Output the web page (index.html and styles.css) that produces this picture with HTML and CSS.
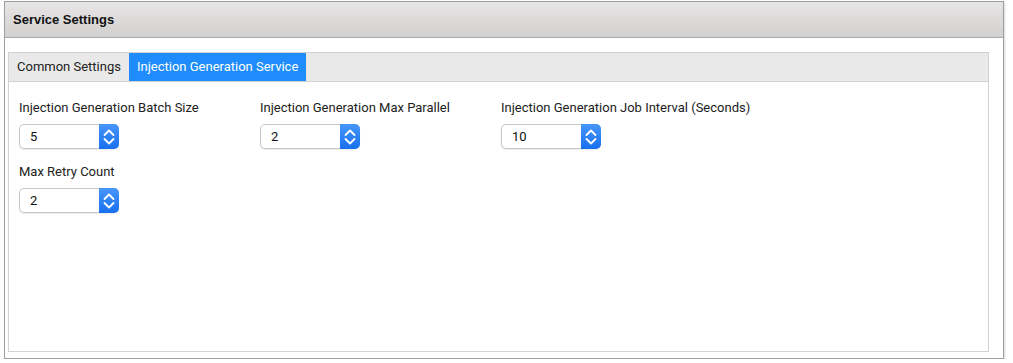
FILE: index.html
```html
<!DOCTYPE html>
<html lang="en">
<head>
    <meta charset="UTF-8">
    <title>Service Settings</title>
    <link rel="stylesheet" href="styles.css">
</head>
<body>
    <div class="panel">
        <div class="panel-header">Service Settings</div>
        <div class="panel-body">
            <div class="tabs">
                <div class="tab-bar">
                    <div class="tab">Common Settings</div>
                    <div class="tab active">Injection Generation Service</div>
                </div>
                <div class="tab-content">
                    <div class="field">
                        <label>Injection Generation Batch Size</label>
                        <div class="spin">
                            <span class="spin-value">5</span>
                            <span class="spin-btn"><svg width="12" height="20" viewBox="0 0 12 20"><path d="M1.5 8 L6 3.5 L10.5 8 M1.5 12 L6 16.5 L10.5 12" fill="none" stroke="#fff" stroke-width="1.8" stroke-linecap="round" stroke-linejoin="round"/></svg></span>
                        </div>
                    </div>
                    <div class="field">
                        <label>Injection Generation Max Parallel</label>
                        <div class="spin">
                            <span class="spin-value">2</span>
                            <span class="spin-btn"><svg width="12" height="20" viewBox="0 0 12 20"><path d="M1.5 8 L6 3.5 L10.5 8 M1.5 12 L6 16.5 L10.5 12" fill="none" stroke="#fff" stroke-width="1.8" stroke-linecap="round" stroke-linejoin="round"/></svg></span>
                        </div>
                    </div>
                    <div class="field">
                        <label>Injection Generation Job Interval (Seconds)</label>
                        <div class="spin">
                            <span class="spin-value">10</span>
                            <span class="spin-btn"><svg width="12" height="20" viewBox="0 0 12 20"><path d="M1.5 8 L6 3.5 L10.5 8 M1.5 12 L6 16.5 L10.5 12" fill="none" stroke="#fff" stroke-width="1.8" stroke-linecap="round" stroke-linejoin="round"/></svg></span>
                        </div>
                    </div>
                    <div class="field">
                        <label>Max Retry Count</label>
                        <div class="spin">
                            <span class="spin-value">2</span>
                            <span class="spin-btn"><svg width="12" height="20" viewBox="0 0 12 20"><path d="M1.5 8 L6 3.5 L10.5 8 M1.5 12 L6 16.5 L10.5 12" fill="none" stroke="#fff" stroke-width="1.8" stroke-linecap="round" stroke-linejoin="round"/></svg></span>
                        </div>
                    </div>
                </div>
            </div>
        </div>
    </div>
</body>
</html>
```

FILE: styles.css
```css
html, body {
    margin: 0;
    padding: 0;
    background-color: #fff;
}

body {
    font-family: Roboto, "Liberation Sans", Arial, sans-serif;
    font-size: 13px;
    color: #222;
}

.panel {
    margin: 1px 0 0 4px;
    width: 1000px;
    height: 358px;
    box-sizing: border-box;
    border: 1px solid #9e9e9e;
    box-shadow: 1px 1px 2px rgba(0, 0, 0, 0.15);
    display: flex;
    flex-direction: column;
}

.panel-header {
    height: 35px;
    flex: none;
    border-bottom: 1px solid #a9a9a9;
    background: linear-gradient(#e7e5e5, #d3d1cf);
    padding-left: 8px;
    display: flex;
    align-items: center;
    font-family: "Liberation Sans", Arial, sans-serif;
    font-weight: bold;
    font-size: 13px;
    color: #111;
}

.panel-body {
    flex-grow: 1;
    padding: 14px 14px 6px 3px;
    display: flex;
}

.tabs {
    flex-grow: 1;
    border: 1px solid #d2d2d2;
    display: flex;
    flex-direction: column;
}

.tab-bar {
    display: flex;
    height: 28px;
    background-color: #e9e9e9;
    border-bottom: 1px solid #d2d2d2;
}

.tab {
    padding: 0 8px;
    line-height: 28px;
    color: #222;
}

.tab.active {
    background-color: #1e8cfa;
    color: #fff;
}

.tab-content {
    padding: 18px 10px 0 10px;
    display: grid;
    grid-template-columns: repeat(3, 241px);
    row-gap: 15px;
    align-content: start;
}

.field label {
    display: block;
    line-height: 16px;
    margin-bottom: 8px;
    white-space: nowrap;
}

.spin {
    display: flex;
    width: 100px;
    height: 25px;
    box-sizing: border-box;
    border: 1px solid #c6c6c6;
    border-radius: 5px;
    box-shadow: 0 1px 1px rgba(0, 0, 0, 0.08);
    background-color: #fff;
}

.spin-value {
    flex-grow: 1;
    padding-left: 10px;
    line-height: 23px;
    color: #111;
}

.spin-btn {
    width: 20px;
    margin: -1px -1px -1px 0;
    border-radius: 0 5px 5px 0;
    background: linear-gradient(#4796fa, #1870f0);
    display: flex;
    align-items: center;
    justify-content: center;
}
```
